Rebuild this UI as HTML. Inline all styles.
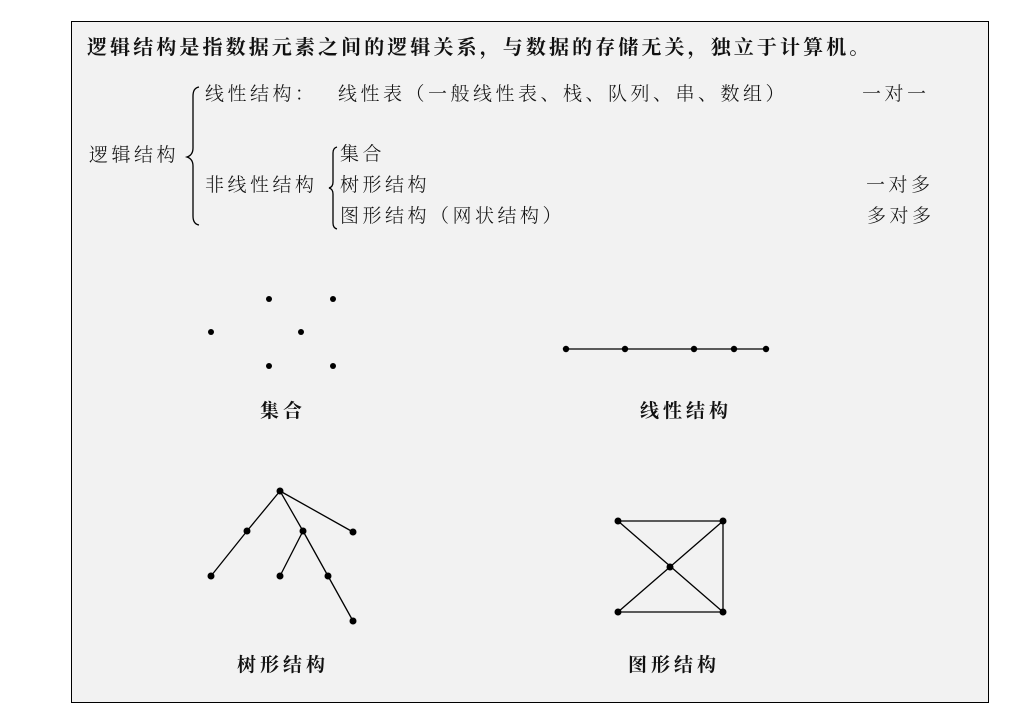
<!DOCTYPE html>
<html><head><meta charset="utf-8"><style>
body{margin:0;width:1013px;height:712px;background:#fff;position:relative;overflow:hidden;font-family:"Liberation Serif","Noto Serif CJK SC",serif;}
#box{position:absolute;left:71px;top:21px;width:916px;height:680px;border:1px solid #000;background:#f2f2f2;}
.t{position:absolute;white-space:nowrap;color:#111;font-size:19px;line-height:22px;letter-spacing:3.5px;font-weight:300;}
.b{font-weight:bold;letter-spacing:3.1px;font-size:20px;}
.l{font-weight:bold;font-size:19px;letter-spacing:4px;}
svg{position:absolute;left:0;top:0;}
</style></head><body>
<div id="box"></div>
<div class="t b" style="left:87px;top:37px;">逻辑结构是指数据元素之间的逻辑关系，与数据的存储无关，独立于计算机。</div>
<div class="t" style="left:205px;top:84px;">线性结构：</div>
<div class="t" style="left:338px;top:84px;">线性表（一般线性表、栈、队列、串、数组）</div>
<div class="t" style="left:862px;top:84px;">一对一</div>
<div class="t" style="left:89px;top:145px;">逻辑结构</div>
<div class="t" style="left:340px;top:144px;">集合</div>
<div class="t" style="left:205px;top:175px;">非线性结构</div>
<div class="t" style="left:340px;top:175px;">树形结构</div>
<div class="t" style="left:866px;top:175px;">一对多</div>
<div class="t" style="left:340px;top:206px;">图形结构（网状结构）</div>
<div class="t" style="left:867px;top:206px;">多对多</div>
<div class="t l" style="left:260px;top:401px;">集合</div>
<div class="t l" style="left:640px;top:401px;">线性结构</div>
<div class="t l" style="left:237px;top:655px;">树形结构</div>
<div class="t l" style="left:628px;top:655px;">图形结构</div>
<svg width="1013" height="712" fill="none" stroke="#000" stroke-width="1.3">
<path d="M199 87 Q193 88 193 96 L193 148 Q193 155 187 157 Q193 159 193 166 L193 216 Q193 224 199 225"/>
<path d="M337 147 Q333 148 333 153 L333 182 Q333 187 329 188 Q333 189 333 194 L333 223 Q333 228 337 229"/>
<path d="M566 349 H766"/>
<path d="M211 576 L247 531 L280 491 L303 531 L280 576 M303 531 L328 576 L353 621 M280 491 L353 532"/>
<path d="M618 521 H723 V612 H618 L723 521 M618 521 L723 612"/>
<g fill="#000" stroke="none">
<circle cx="269" cy="299" r="3"/><circle cx="333" cy="299" r="3"/><circle cx="211" cy="332" r="3"/><circle cx="301" cy="332" r="3"/><circle cx="269" cy="366" r="3"/><circle cx="333" cy="366" r="3"/>
<circle cx="566" cy="349" r="3.2"/><circle cx="625" cy="349" r="3.2"/><circle cx="694" cy="349" r="3.2"/><circle cx="734" cy="349" r="3.2"/><circle cx="766" cy="349" r="3.2"/>
<circle cx="280" cy="491" r="3.5"/><circle cx="247" cy="531" r="3.5"/><circle cx="303" cy="531" r="3.5"/><circle cx="353" cy="532" r="3.5"/><circle cx="211" cy="576" r="3.5"/><circle cx="280" cy="576" r="3.5"/><circle cx="328" cy="576" r="3.5"/><circle cx="353" cy="621" r="3.5"/>
<circle cx="618" cy="521" r="3.5"/><circle cx="723" cy="521" r="3.5"/><circle cx="670" cy="567" r="3.5"/><circle cx="618" cy="612" r="3.5"/><circle cx="723" cy="612" r="3.5"/>
</g></svg>
</body></html>
